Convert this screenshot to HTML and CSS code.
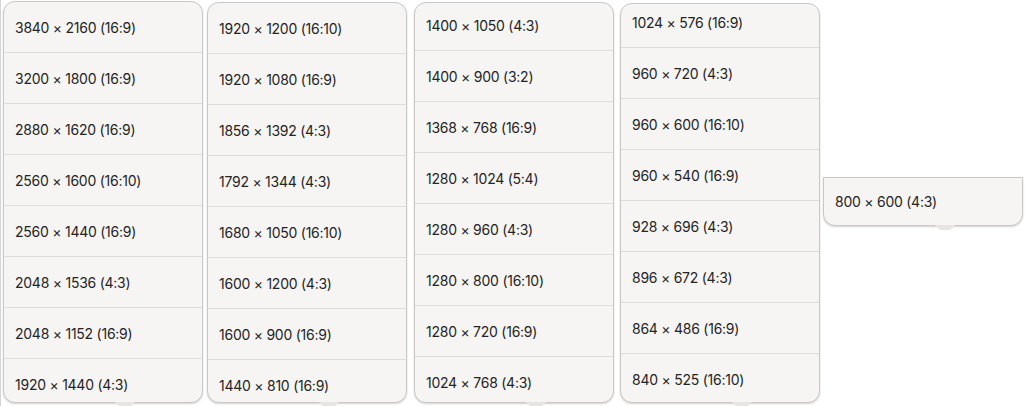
FILE: index.html
```html
<!DOCTYPE html>
<html>
<head>
<meta charset="utf-8">
<link rel="stylesheet" href="styles.css">
</head>
<body>
<div class="stage">
  <div class="pop pop1">
    <div class="clip">
      <ul class="list">
        <li class="row">3840 × 2160 (16:9)</li>
        <li class="row">3200 × 1800 (16:9)</li>
        <li class="row">2880 × 1620 (16:9)</li>
        <li class="row">2560 × 1600 (16:10)</li>
        <li class="row">2560 × 1440 (16:9)</li>
        <li class="row">2048 × 1536 (4:3)</li>
        <li class="row">2048 × 1152 (16:9)</li>
        <li class="row">1920 × 1440 (4:3)</li>
      </ul>
    </div>
  </div>
  <div class="pop pop2">
    <div class="clip">
      <ul class="list">
        <li class="row">1920 × 1200 (16:10)</li>
        <li class="row">1920 × 1080 (16:9)</li>
        <li class="row">1856 × 1392 (4:3)</li>
        <li class="row">1792 × 1344 (4:3)</li>
        <li class="row">1680 × 1050 (16:10)</li>
        <li class="row">1600 × 1200 (4:3)</li>
        <li class="row">1600 × 900 (16:9)</li>
        <li class="row">1440 × 810 (16:9)</li>
      </ul>
    </div>
  </div>
  <div class="pop pop3">
    <div class="clip">
      <ul class="list list3">
        <li class="row">1400 × 1050 (4:3)</li>
        <li class="row">1400 × 900 (3:2)</li>
        <li class="row">1368 × 768 (16:9)</li>
        <li class="row">1280 × 1024 (5:4)</li>
        <li class="row">1280 × 960 (4:3)</li>
        <li class="row">1280 × 800 (16:10)</li>
        <li class="row">1280 × 720 (16:9)</li>
        <li class="row">1024 × 768 (4:3)</li>
      </ul>
    </div>
  </div>
  <div class="pop pop4">
    <div class="clip">
      <ul class="list list4">
        <li class="row">1024 × 576 (16:9)</li>
        <li class="row">960 × 720 (4:3)</li>
        <li class="row">960 × 600 (16:10)</li>
        <li class="row">960 × 540 (16:9)</li>
        <li class="row">928 × 696 (4:3)</li>
        <li class="row">896 × 672 (4:3)</li>
        <li class="row">864 × 486 (16:9)</li>
        <li class="row">840 × 525 (16:10)</li>
      </ul>
    </div>
  </div>
  <div class="pop pop5">
    <div class="clip">
      <ul class="list">
        <li class="row">800 × 600 (4:3)</li>
      </ul>
    </div>
  </div>
</div>
</body>
</html>
```
FILE: styles.css
```css
html, body {
  margin: 0;
  padding: 0;
  background: #ffffff;
}
body {
  width: 1026px;
  height: 406px;
  overflow: hidden;
  font-family: "Inter", "Noto Sans", sans-serif;
  font-size: 14px;
  letter-spacing: -0.25px;
  color: #242424;
}
.stage {
  display: flex;
  align-items: flex-start;
  padding-left: 3px;
  border-left: 1px solid #d4d4d4;
  box-sizing: border-box;
  height: 406px;
  padding-left: 2px;
}
.pop {
  position: relative;
  box-sizing: border-box;
  width: 200px;
  flex: none;
  background: #f6f5f4;
  border: 1px solid #c9c8c6;
  border-radius: 12px;
  box-shadow: 0 1px 2px rgba(0, 0, 0, 0.18);
}
.pop::after {
  content: "";
  position: absolute;
  left: 111px;
  top: 100%;
  width: 20px;
  height: 5px;
  background: #e6e5e3;
  clip-path: polygon(0 0, 100% 0, 75% 100%, 25% 100%);
}
.clip {
  height: 100%;
  overflow: hidden;
  border-radius: 11px;
}
.list {
  list-style: none;
  margin: 0;
  padding: 0;
}
.list3 { margin-top: -3px; }
.list4 { margin-top: -7px; }
.row {
  box-sizing: border-box;
  height: 51px;
  padding-left: 11px;
  display: flex;
  align-items: center;
  white-space: nowrap;
  border-bottom: 1px solid #dedddb;
}
.pop1 { margin-top: 1px; height: 402px; }
.pop2 { margin-left: 4px; margin-top: 2px; height: 401px; }
.pop3 { margin-left: 7px; margin-top: 2px; height: 401px; }
.pop4 { margin-left: 6px; margin-top: 3px; height: 400px; }
.pop5 {
  margin-left: 3px;
  margin-top: 177px;
  height: 49px;
  border-radius: 0 0 12px 12px;
}
.pop5 .clip { border-radius: 0 0 11px 11px; }
.pop5 .row { border-bottom: none; height: 47px; }
```
